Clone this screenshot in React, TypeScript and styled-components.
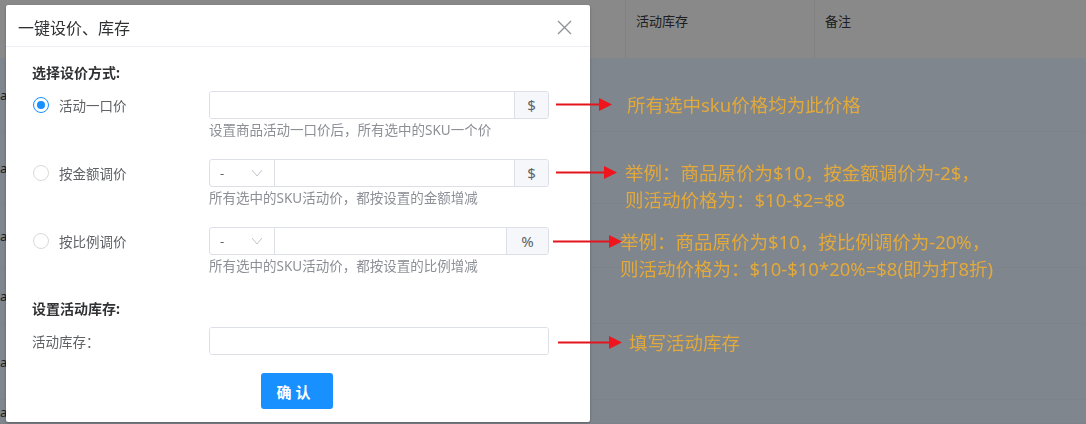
import { createGlobalStyle, styled } from 'styled-components';

const GlobalStyle = createGlobalStyle`
  html, body {
    margin: 0;
    padding: 0;
  }
  body {
    width: 1086px;
    height: 424px;
    overflow: hidden;
    font-family: 'Noto Sans', 'Noto Sans CJK SC', sans-serif;
    background: #e3effc;
  }
  * {
    box-sizing: border-box;
  }
`;

const Table = styled.div`
  width: 1086px;
  height: 424px;
  background: #e3effc;
`;

const HeadRow = styled.div`
  display: grid;
  grid-template-columns: 625px 189px 1fr;
  height: 58px;
  background: #f5f5f5;
`;

const HeadCell = styled.div`
  padding: 11px 10px 0;
  font-size: 13px;
  color: #363636;
  border-left: 1px solid #e6e6e6;
  &:first-child {
    border-left: 0;
  }
`;

const BodyRow = styled.div<{ $h: number }>`
  height: ${(p) => p.$h}px;
  display: flex;
  align-items: center;
  border-bottom: 1px solid #dfe9f5;
  font-size: 13px;
  color: #363636;
`;

const Mask = styled.div`
  position: fixed;
  inset: 0;
  background: rgba(0, 0, 0, 0.44);
`;

const Layer = styled.div`
  position: fixed;
  inset: 0;
  display: flex;
  align-items: flex-start;
`;

const Modal = styled.div`
  width: 584px;
  margin: 5px 0 0 6px;
  background: #fff;
  border-radius: 2px;
  box-shadow: 0 1px 3px rgba(0, 0, 0, 0.3);
`;

const Header = styled.div`
  height: 42px;
  padding: 3px 18px 0 12px;
  display: flex;
  align-items: center;
  justify-content: space-between;
  border-bottom: 1px solid #ebeef5;
`;

const Title = styled.span`
  font-size: 16px;
  color: #303133;
`;

const Body = styled.div`
  padding: 16px 41px 13px 26px;
`;

const SectionTitle = styled.div<{ $mt?: number }>`
  margin-top: ${(p) => p.$mt ?? 0}px;
  margin-bottom: 8px;
  font-size: 14px;
  line-height: 20px;
  font-weight: 700;
  color: #303133;
`;

const OptionRow = styled.div<{ $mt?: number }>`
  display: grid;
  grid-template-columns: 177px 340px;
  margin-top: ${(p) => p.$mt ?? 0}px;
`;

const RadioLabel = styled.label`
  height: 28px;
  display: flex;
  align-items: center;
  gap: 10px;
  padding-left: 1px;
  font-size: 13.5px;
  color: #606266;
`;

const PlainLabel = styled.label`
  height: 28px;
  display: flex;
  align-items: center;
  font-size: 13.5px;
  color: #606266;
`;

const Radio = styled.span<{ $checked?: boolean }>`
  width: 16px;
  height: 16px;
  border-radius: 50%;
  border: 1px solid ${(p) => (p.$checked ? '#1890ff' : '#d9d9d9')};
  display: flex;
  align-items: center;
  justify-content: center;
  &::after {
    content: '';
    width: 8px;
    height: 8px;
    border-radius: 50%;
    background: ${(p) => (p.$checked ? '#1890ff' : 'transparent')};
  }
`;

const Field = styled.div`
  display: flex;
  flex-direction: column;
`;

const InputGroup = styled.div`
  height: 28px;
  display: flex;
  border: 1px solid #dcdfe6;
  border-radius: 3px;
  overflow: hidden;
`;

const TextInput = styled.input`
  flex: 1;
  min-width: 0;
  border: 0;
  outline: none;
  padding: 0 10px;
  font-size: 13px;
  background: #fff;
`;

const Select = styled.div`
  width: 65px;
  display: flex;
  align-items: center;
  justify-content: space-between;
  padding: 0 11px 0 10px;
  border-right: 1px solid #dcdfe6;
  font-size: 13px;
  color: #606266;
`;

const Suffix = styled.span<{ $w: number }>`
  width: ${(p) => p.$w}px;
  display: flex;
  align-items: center;
  justify-content: center;
  border-left: 1px solid #dcdfe6;
  background: #f5f7fa;
  font-size: 15px;
  color: #606266;
`;

const Help = styled.div`
  margin-top: 2px;
  font-size: 13.5px;
  line-height: 18px;
  color: #8c8f96;
`;

const Footer = styled.div`
  display: flex;
  justify-content: center;
  margin-top: 18px;
  padding-left: 12px;
`;

const ConfirmButton = styled.button`
  width: 72px;
  height: 36px;
  border: 0;
  border-radius: 3px;
  background: #1890ff;
  color: #fff;
  font-family: inherit;
  font-size: 15px;
  font-weight: 700;
  letter-spacing: 4px;
  padding-left: 4px;
`;

const Notes = styled.div`
  display: flex;
  flex-direction: column;
  margin-left: -37px;
`;

const Note = styled.div<{ $mt: number; $indent: number }>`
  display: flex;
  align-items: flex-start;
  margin-top: ${(p) => p.$mt}px;
  padding-left: ${(p) => p.$indent}px;
`;

const NoteText = styled.div<{ $gap: number }>`
  margin-left: ${(p) => p.$gap}px;
  font-size: 18.5px;
  line-height: 27px;
  color: #e3a93b;
  white-space: nowrap;
`;

function Chevron() {
  return (
    <svg width="12" height="8" viewBox="0 0 12 8">
      <path d="M1 1 L6 7 L11 1" fill="none" stroke="#c0c4cc" strokeWidth="1" />
    </svg>
  );
}

function CloseIcon() {
  return (
    <svg width="15" height="15" viewBox="0 0 15 15">
      <path d="M1 1 L14 14 M14 1 L1 14" stroke="#909399" strokeWidth="1.4" />
    </svg>
  );
}

function Arrow({ len }: { len: number }) {
  const y = 13.5;
  return (
    <svg width={len} height="27" viewBox={`0 0 ${len} 27`}>
      <line x1="0" y1={y} x2={len - 12} y2={y} stroke="#e3141c" strokeWidth="2" />
      <polygon
        points={`${len - 13},${y - 6.5} ${len},${y} ${len - 13},${y + 6.5}`}
        fill="#f0141c"
      />
    </svg>
  );
}

const rowHeights = [74, 72, 64, 56, 76, 24];

const notes = [
  { mt: 91, indent: 3, len: 56, gap: 15, lines: ['所有选中sku价格均为此价格'] },
  {
    mt: 41,
    indent: 3,
    len: 61,
    gap: 8,
    lines: ['举例：商品原价为$10，按金额调价为-2$，', '则活动价格为：$10-$2=$8'],
  },
  {
    mt: 15,
    indent: 0,
    len: 69,
    gap: -2,
    lines: [
      '举例：商品原价为$10，按比例调价为-20%，',
      '则活动价格为：$10-$10*20%=$8(即为打8折)',
    ],
  },
  { mt: 47, indent: 5, len: 64, gap: 7, lines: ['填写活动库存'] },
];

export default function App() {
  return (
    <>
      <GlobalStyle />
      <Table>
        <HeadRow>
          <HeadCell />
          <HeadCell>活动库存</HeadCell>
          <HeadCell>备注</HeadCell>
        </HeadRow>
        {rowHeights.map((h, i) => (
          <BodyRow key={i} $h={h}>
            a
          </BodyRow>
        ))}
      </Table>
      <Mask />
      <Layer>
        <Modal>
          <Header>
            <Title>一键设价、库存</Title>
            <CloseIcon />
          </Header>
          <Body>
            <SectionTitle>选择设价方式:</SectionTitle>
            <OptionRow>
              <RadioLabel>
                <Radio $checked />
                活动一口价
              </RadioLabel>
              <Field>
                <InputGroup>
                  <TextInput />
                  <Suffix $w={34}>$</Suffix>
                </InputGroup>
                <Help>设置商品活动一口价后，所有选中的SKU一个价</Help>
              </Field>
            </OptionRow>
            <OptionRow $mt={20}>
              <RadioLabel>
                <Radio />
                按金额调价
              </RadioLabel>
              <Field>
                <InputGroup>
                  <Select>
                    -
                    <Chevron />
                  </Select>
                  <TextInput />
                  <Suffix $w={34}>$</Suffix>
                </InputGroup>
                <Help>所有选中的SKU活动价，都按设置的金额增减</Help>
              </Field>
            </OptionRow>
            <OptionRow $mt={20}>
              <RadioLabel>
                <Radio />
                按比例调价
              </RadioLabel>
              <Field>
                <InputGroup>
                  <Select>
                    -
                    <Chevron />
                  </Select>
                  <TextInput />
                  <Suffix $w={42}>%</Suffix>
                </InputGroup>
                <Help>所有选中的SKU活动价，都按设置的比例增减</Help>
              </Field>
            </OptionRow>
            <SectionTitle $mt={24}>设置活动库存:</SectionTitle>
            <OptionRow>
              <PlainLabel>活动库存：</PlainLabel>
              <InputGroup>
                <TextInput />
              </InputGroup>
            </OptionRow>
            <Footer>
              <ConfirmButton>确认</ConfirmButton>
            </Footer>
          </Body>
        </Modal>
        <Notes>
          {notes.map((n, i) => (
            <Note key={i} $mt={n.mt} $indent={n.indent}>
              <Arrow len={n.len} />
              <NoteText $gap={n.gap}>
                {n.lines.map((l) => (
                  <div key={l}>{l}</div>
                ))}
              </NoteText>
            </Note>
          ))}
        </Notes>
      </Layer>
    </>
  );
}
